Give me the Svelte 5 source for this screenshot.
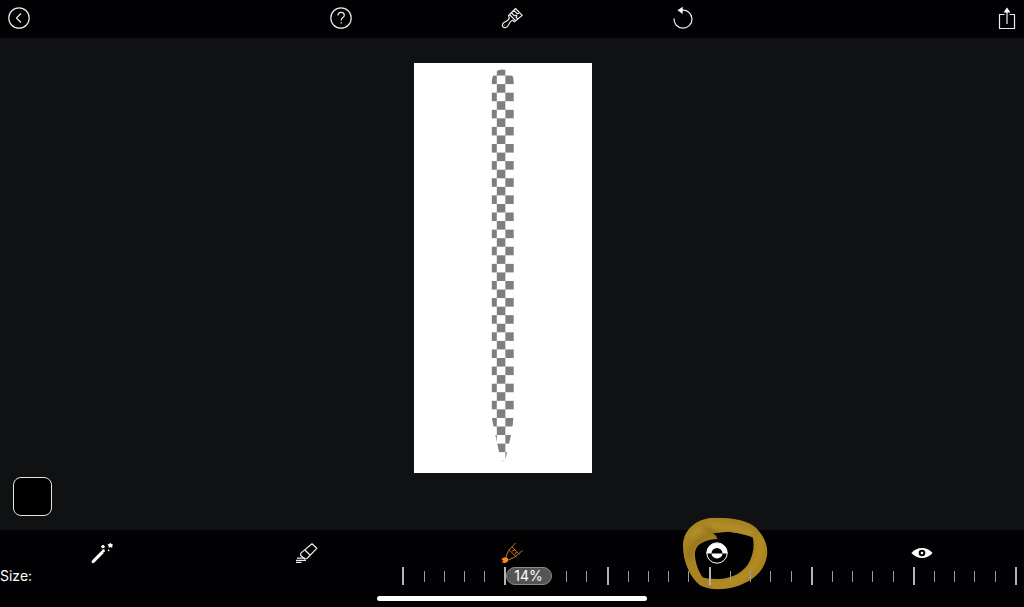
<script>
  let size = $state(14);
  const ticks = Array.from({ length: 31 }, (_, i) => i);
</script>

<div class="editor">
  <header>
    <button class="start" aria-label="Back">
      <svg width="22" height="22" viewBox="0 0 22 22" class="line"><circle cx="11" cy="11" r="10.200" /><path d="M13 6.500 8.500 11l4.500 4.500" /></svg>
    </button>
    <button aria-label="Help">
      <svg width="22" height="22" viewBox="0 0 22 22" class="line"><circle cx="11" cy="11" r="10.200" /><path d="M8 8.500C8 6.500 9.200 5.400 11.100 5.400s3.200 1.100 3.200 2.800c0 2.300-3.100 2.500-3.100 5.200M11.200 15v1.600" /></svg>
    </button>
    <button aria-label="Brush">
      <svg width="24" height="24" viewBox="0 0 24 24" class="line"><path d="m15.500 2.500 6.700 6.900-7.800 6.400-2-1.500c-1 .6-1.600 1.100-2.400 2L7.800 20c-1.300 2-3.700 2.100-4.800.900s-.6-3.200 1-4.300l3.500-2c1.200-.8 1.600-1.500 1.700-2.700l-.6-2.400zM10 9l5.500 5.700M11.700 7l2.600 2.600 2.500-.3-.6 2.500 2 1M14 4.300l3 3.300 2-.2M4.500 19h.500" /></svg>
    </button>
    <button aria-label="Undo">
      <svg width="22" height="24" viewBox="0 0 22 24" class="line"><path d="M10 4.200A9 9 0 1 1 2 12.500" /><path d="m5.500 4.300 5.200-3.600v7.200z" fill="#fff" stroke="none" /></svg>
    </button>
    <button class="end" aria-label="Share">
      <svg width="18" height="24" viewBox="0 0 18 24" class="line"><path d="M6.500 8.500h-5v14h15v-14h-5M9 18V4" /><path d="m5.500 6.500 3.500-5 3.500 5z" fill="#fff" stroke="none" /></svg>
    </button>
  </header>

  <main>
    <svg class="art" viewBox="0 0 179 411" role="img" aria-label="Artwork with a transparent pencil shape">
      <defs>
        <pattern id="checks" x="83" y="4" width="17.160" height="17.160" patternUnits="userSpaceOnUse">
          <rect width="17.160" height="17.160" fill="#fff" />
          <rect width="8.580" height="8.580" fill="#7f7f7f" />
          <rect x="8.580" y="8.580" width="8.580" height="8.580" fill="#7f7f7f" />
        </pattern>
      </defs>
      <rect width="179" height="411" fill="#fff" />
      <path fill="url(#checks)" d="M78 20Q78 7 89 6.500Q100 7 100 20V350Q99.500 363 97 374L92.500 394Q91 400 88.500 399Q86.500 397 84 384L80 366Q78 358 78 350Z" />
    </svg>
    <button class="swatch" aria-label="Brush colour"></button>
  </main>

  <footer>
    <nav aria-label="Tools">
      <button aria-label="Magic wand">
        <svg width="24" height="22" viewBox="0 0 24 22" fill="#fff"><path d="m2 18.500 9.500-9.700 2.300 2.200-9.600 9.800z" /><circle cx="2.900" cy="19.800" r="1.400" /><circle cx="13.400" cy="8.800" r="1.500" /><circle cx="13" cy="4.600" r="1.300" /><path d="m13 2.500.7 1.300 1.500.1-1 1.200.3 1.500-1.500-.6-1.400.6.100-1.500-1-1.200 1.500-.2zM20.300.7l1 1.500 1.900.2-1.100 1.500.3 2-1.900-.8-1.800.9.100-2-1.300-1.500 1.900-.4z" /><circle cx="20.300" cy="3.400" r="1.800" /><circle cx="18.700" cy="8.400" r=".8" /></svg>
      </button>
      <button aria-label="Eraser">
        <svg width="24" height="22" viewBox="0 0 24 22" class="line"><path d="m17 1.800 4.800 4.500L12 16.500l-2.500.3-4-3.600.6-2.300zM9.800 8l5 4.700M2 16.200h8M1 18.300h10M1 20.400h5.500" /></svg>
      </button>
      <button aria-label="Paint brush" aria-pressed="true">
        <svg width="24" height="22" viewBox="0 0 24 22" fill="none" stroke="#c9712c"><path d="M15.500 1 8.500 8.500 6 15M22.500 8.500l-8 6.700-6.500 3M9 7.700l7.500 7.500M12 4.900l7.500 7.600M12 9l3-1M15 12.500l1.500-2.500" /><path d="M1.500 17.200c1.200-1.500 3.300-2.500 5.300-1.600 1.900 1.200 1.900 3.200.3 4.500-1.700 1.500-3.400.6-5.400.3l1.600-1.600z" fill="#ff851f" stroke="none" /></svg>
      </button>
      <div class="marked">
        <svg class="ring" width="90" height="77" viewBox="60 30 270 231" aria-hidden="true">
          <defs>
            <filter id="soft"><feGaussianBlur stdDeviation="2" /></filter>
            <filter id="shade" x="-30%" y="-30%" width="160%" height="160%"><feGaussianBlur stdDeviation="7" /></filter>
            <clipPath id="band"><path clip-rule="evenodd" d="M69 120C70 78 103 42 160 38C195 38 250 40 280 62C306 82 323 115 322 145C318 190 288 222 240 241C200 254 155 260 120 241C88 216 68 165 69 120ZM172 102C170 94 165 88 158 85L205 80C230 83 260 89 278 97C284 120 280 148 266 175C248 204 218 218 189 221C165 223 139 222 128 217C113 196 101 159 106 136C113 113 143 103 172 102Z" /></clipPath>
          </defs>
          <g filter="url(#soft)">
            <g clip-path="url(#band)">
              <rect x="55" y="30" width="280" height="235" fill="#a88322" />
              <g filter="url(#shade)" fill="none">
                <path d="M92 98Q125 55 180 63T280 89" stroke="#b38f29" stroke-width="18" />
                <path d="M297 92Q313 155 265 202T150 237" stroke="#b38c22" stroke-width="18" />
                <path d="M88 165Q85 110 150 92" stroke="#97761c" stroke-width="16" />
                <path d="M128 66Q164 70 172 106" stroke="#806719" stroke-width="8" />
              </g>
            </g>
          </g>
        </svg>
        <button aria-label="Invert mask">
          <svg width="22" height="22" viewBox="0 0 22 22"><circle cx="11" cy="11" r="10.200" fill="#000" stroke="#fff" /><path d="M.5 11.500a10.500 10.500 0 0 1 21 0h-5a5.500 5.500 0 0 0-11 0z" fill="#fff" /><path d="M5.500 11.500h11a5.500 5 0 0 1-11 0z" fill="#fff" /></svg>
        </button>
      </div>
      <button aria-label="Preview">
        <svg width="22" height="22" viewBox="0 0 22 22"><path d="M.4 11Q5 6 11 6t10.600 5Q17 16 11 16T.4 11z" fill="#fff" /><circle cx="11" cy="11" r="3.300" fill="#000" /><circle cx="11" cy="11" r="1.300" fill="#fff" /></svg>
      </button>
    </nav>

    <div class="size">
      <label for="size">Size:</label>
      <div class="ruler">
        {#each ticks as tick}
          <i class:major={tick % 5 === 0}></i>
        {/each}
        <output for="size" style:left="{size * 1.2}%">{size}%</output>
        <input id="size" type="range" min="0" max="100" bind:value={size} />
      </div>
    </div>
    <div class="home"></div>
  </footer>
</div>

<style>
  :global(body) { margin: 0; background: #020204; }
  .editor {
    min-height: 100vh;
    display: flex;
    flex-direction: column;
    background: #020204;
    color: #fff;
    font-family: Inter, "Liberation Sans", sans-serif;
    overflow: hidden;
  }
  button {
    display: flex;
    justify-content: center;
    align-items: center;
    padding: 0;
    border: 0;
    background: none;
    color: inherit;
    cursor: pointer;
  }
  .line { fill: none; stroke: #ececec; stroke-width: 1.2; stroke-linejoin: round; }
  header {
    display: grid;
    grid-template-columns: 3fr 2fr 2fr 2fr 3fr;
    align-items: center;
    box-sizing: border-box;
    height: 38px;
    padding-bottom: 2px;
  }
  .start { justify-self: start; margin-left: 8px; }
  .end { justify-self: end; margin-right: 8px; }
  main {
    flex: 1;
    position: relative;
    display: flex;
    justify-content: center;
    align-items: flex-start;
    padding: 25px 18px 57px 0;
    background: #101113;
  }
  .art { display: block; height: calc(100vh - 197px); min-height: 200px; }
  .swatch {
    position: absolute;
    left: 13px;
    bottom: 14px;
    width: 39px;
    height: 39px;
    border: 1px solid #e4e4e4;
    border-radius: 8px;
    background: #000;
  }
  footer { position: relative; }
  nav {
    display: grid;
    grid-template-columns: repeat(5, 1fr);
    padding: 12px 0 2px;
  }
  .marked { position: relative; display: flex; justify-content: center; }
  .marked button { position: relative; }
  .ring {
    position: absolute;
    left: calc(50% - 37px);
    top: -27px;
    pointer-events: none;
  }
  .size {
    position: relative;
    display: grid;
    grid-template-columns: 39% 1fr;
    align-items: center;
    height: 20px;
  }
  label { font-size: 14px; line-height: 20px; }
  .ruler {
    position: relative;
    display: flex;
    justify-content: space-between;
    align-items: center;
    height: 20px;
    margin: 0 7px 0 3px;
  }
  i { width: 1px; height: 11px; background: #999; }
  i.major { width: 2px; height: 18px; background: #b4b4b4; }
  output {
    position: absolute;
    top: 1px;
    box-sizing: border-box;
    width: 46px;
    height: 18px;
    border: 1px solid #8c8c8c;
    border-radius: 9px;
    background: #555;
    font-size: 14px;
    line-height: 16px;
    text-align: center;
  }
  input {
    position: absolute;
    inset: 0;
    width: 100%;
    height: 100%;
    margin: 0;
    opacity: 0;
    cursor: pointer;
  }
  .home {
    width: 270px;
    height: 5px;
    margin: 10px auto 6px;
    border-radius: 3px;
    background: #fff;
  }
</style>
